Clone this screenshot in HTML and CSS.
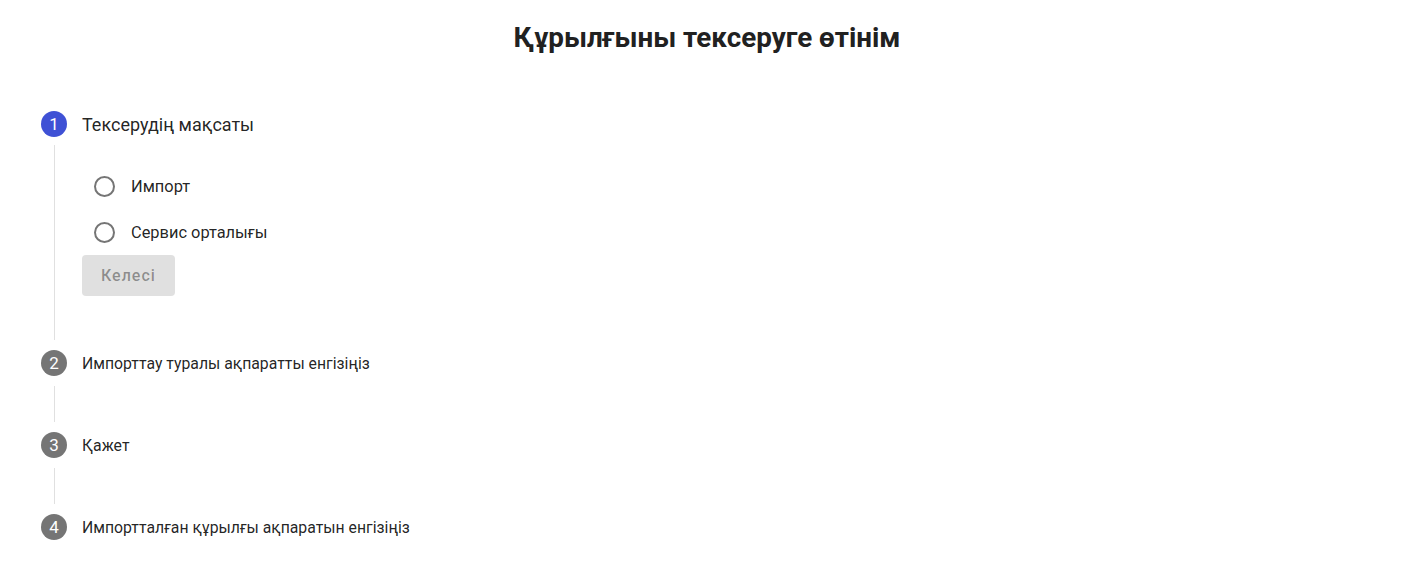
FILE: index.html
```html
<!DOCTYPE html>
<html lang="kk">
<head>
<meta charset="utf-8">
<link rel="stylesheet" href="styles.css">
</head>
<body>
<div class="page">
  <h1 class="title">Құрылғыны тексеруге өтінім</h1>
  <div class="stepper">
    <div class="step">
      <div class="step-head">
        <span class="step-icon active">1</span>
        <span class="step-label active">Тексерудің мақсаты</span>
      </div>
      <div class="step-content">
        <label class="radio-row"><span class="radio"></span><span class="radio-text">Импорт</span></label>
        <label class="radio-row"><span class="radio"></span><span class="radio-text">Сервис орталығы</span></label>
        <button class="btn" disabled>Келесі</button>
      </div>
    </div>
    <div class="step">
      <div class="step-head">
        <span class="step-icon">2</span>
        <span class="step-label">Импорттау туралы ақпаратты енгізіңіз</span>
      </div>
      <div class="connector"></div>
    </div>
    <div class="step">
      <div class="step-head">
        <span class="step-icon">3</span>
        <span class="step-label">Қажет</span>
      </div>
      <div class="connector"></div>
    </div>
    <div class="step">
      <div class="step-head">
        <span class="step-icon">4</span>
        <span class="step-label">Импортталған құрылғы ақпаратын енгізіңіз</span>
      </div>
    </div>
  </div>
</div>
</body>
</html>
```
FILE: styles.css
```css
* { box-sizing: border-box; }
html, body { margin: 0; background: #fff; }
body {
  font-family: Roboto, "Noto Sans", "Liberation Sans", sans-serif;
  color: rgba(0,0,0,0.87);
}
.page { padding: 0 41px; }
.title {
  margin: 0;
  padding-top: 22px;
  padding-left: 6px;
  font-size: 27.8px;
  line-height: 32px;
  font-weight: 700;
  text-align: center;
  color: #212121;
}
.stepper {
  padding-top: 57px;
  display: flex;
  flex-direction: column;
}
.step-head {
  display: flex;
  align-items: center;
  gap: 15px;
  height: 26px;
}
.step-icon {
  width: 26px;
  height: 26px;
  border-radius: 50%;
  background: #757575;
  color: #fff;
  font-size: 17px;
  display: flex;
  align-items: center;
  justify-content: center;
  flex: none;
}
.step-icon.active { background: #3f51d5; }
.step-label { font-size: 15.8px; color: rgba(0,0,0,0.87); }
.step-label.active { font-size: 18px; }
.step-content {
  margin: 8px 0 10px 13px;
  border-left: 1px solid #e0e0e0;
  padding: 18px 0 44px 27px;
  display: flex;
  flex-direction: column;
  align-items: flex-start;
}
.radio-row {
  display: flex;
  align-items: center;
  height: 46px;
  padding-left: 12px;
  gap: 16px;
  cursor: pointer;
}
.radio {
  width: 21px;
  height: 21px;
  border: 2px solid #757575;
  border-radius: 50%;
  flex: none;
}
.radio-text { font-size: 16.4px; }
.btn {
  height: 41px;
  padding: 0 19px;
  border: none;
  border-radius: 4px;
  background: #e0e0e0;
  color: rgba(0,0,0,0.38);
  font-family: inherit;
  font-size: 16px;
  font-weight: 500;
  letter-spacing: 1px;
}
.connector {
  margin: 10px 0 10px 13px;
  height: 36px;
  border-left: 1px solid #e0e0e0;
}
```
